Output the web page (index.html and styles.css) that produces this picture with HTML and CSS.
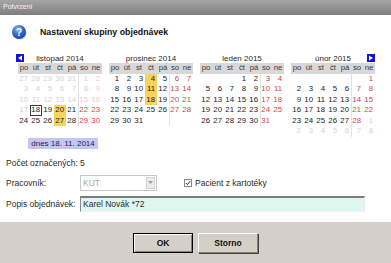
FILE: index.html
```html
<!DOCTYPE html>
<html lang="cs">
<head>
    <meta charset="UTF-8">
    <title>Potvrzení</title>
    <link rel="stylesheet" href="styles.css">
</head>
<body>
    <div class="dialog">
        <div class="titlebar">Potvrzení</div>

        <div class="content">
            <div class="heading">
                <svg class="icon" width="16" height="16" viewBox="0 0 16 16">
                    <defs>
                        <radialGradient id="qball" cx="0.4" cy="0.3" r="0.8">
                            <stop offset="0" stop-color="#8fb4f0"/>
                            <stop offset="0.5" stop-color="#3468c8"/>
                            <stop offset="1" stop-color="#173f98"/>
                        </radialGradient>
                    </defs>
                    <ellipse cx="8.6" cy="9" rx="7" ry="6.6" fill="#c8c8c8"/>
                    <circle cx="8" cy="8" r="7" fill="url(#qball)"/>
                    <text x="8" y="11.6" text-anchor="middle" class="icon-mark">?</text>
                </svg>
                <span class="heading-text">Nastavení skupiny objednávek</span>
            </div>

            <div class="months">
                <div class="month">
                    <div class="caption">
                        <svg class="nav prev" width="8" height="8" viewBox="0 0 8 8"><rect width="8" height="8" fill="#1414d8"/><path d="M2 4 L6 1.5 L6 6.5 Z" fill="#fff"/></svg>
                        <span>listopad 2014</span>
                        <span></span>
                    </div>
                    <div class="grid">
                        <span class="dow">po</span><span class="dow">út</span><span class="dow">st</span><span class="dow">čt</span><span class="dow">pá</span><span class="dow">so</span><span class="dow">ne</span>
                        <span class="day past">27</span><span class="day past">28</span><span class="day past">29</span><span class="day past">30</span><span class="day past">31</span><span class="day past we">1</span><span class="day past we">2</span>
                        <span class="day past">3</span><span class="day past">4</span><span class="day past">5</span><span class="day past">6</span><span class="day past">7</span><span class="day past we">8</span><span class="day past we">9</span>
                        <span class="day past">10</span><span class="day past">11</span><span class="day past">12</span><span class="day past">13</span><span class="day past">14</span><span class="day past we">15</span><span class="day past we">16</span>
                        <span class="day past">17</span><span class="day today">18</span><span class="day">19</span><span class="day mark">20</span><span class="day">21</span><span class="day we">22</span><span class="day we">23</span>
                        <span class="day">24</span><span class="day">25</span><span class="day">26</span><span class="day mark">27</span><span class="day">28</span><span class="day we">29</span><span class="day we">30</span>
                    </div>
                </div>

                <div class="month">
                    <div class="caption">
                        <span></span>
                        <span>prosinec 2014</span>
                        <span></span>
                    </div>
                    <div class="grid">
                        <span class="dow">po</span><span class="dow">út</span><span class="dow">st</span><span class="dow">čt</span><span class="dow">pá</span><span class="dow">so</span><span class="dow">ne</span>
                        <span class="day">1</span><span class="day">2</span><span class="day">3</span><span class="day mark">4</span><span class="day">5</span><span class="day we">6</span><span class="day we">7</span>
                        <span class="day">8</span><span class="day">9</span><span class="day">10</span><span class="day mark">11</span><span class="day">12</span><span class="day we">13</span><span class="day we">14</span>
                        <span class="day">15</span><span class="day">16</span><span class="day">17</span><span class="day mark">18</span><span class="day">19</span><span class="day we">20</span><span class="day we">21</span>
                        <span class="day">22</span><span class="day">23</span><span class="day">24</span><span class="day">25</span><span class="day">26</span><span class="day we">27</span><span class="day we">28</span>
                        <span class="day">29</span><span class="day">30</span><span class="day">31</span><span class="day"></span><span class="day"></span><span class="day"></span><span class="day"></span>
                    </div>
                </div>

                <div class="month">
                    <div class="caption">
                        <span></span>
                        <span>leden 2015</span>
                        <span></span>
                    </div>
                    <div class="grid">
                        <span class="dow">po</span><span class="dow">út</span><span class="dow">st</span><span class="dow">čt</span><span class="dow">pá</span><span class="dow">so</span><span class="dow">ne</span>
                        <span class="day"></span><span class="day"></span><span class="day"></span><span class="day">1</span><span class="day">2</span><span class="day we">3</span><span class="day we">4</span>
                        <span class="day">5</span><span class="day">6</span><span class="day">7</span><span class="day">8</span><span class="day">9</span><span class="day we">10</span><span class="day we">11</span>
                        <span class="day">12</span><span class="day">13</span><span class="day">14</span><span class="day">15</span><span class="day">16</span><span class="day we">17</span><span class="day we">18</span>
                        <span class="day">19</span><span class="day">20</span><span class="day">21</span><span class="day">22</span><span class="day">23</span><span class="day we">24</span><span class="day we">25</span>
                        <span class="day">26</span><span class="day">27</span><span class="day">28</span><span class="day">29</span><span class="day">30</span><span class="day we">31</span><span class="day"></span>
                    </div>
                </div>

                <div class="month">
                    <div class="caption">
                        <span></span>
                        <span>únor 2015</span>
                        <svg class="nav next" width="8" height="8" viewBox="0 0 8 8"><rect width="8" height="8" fill="#1414d8"/><path d="M6 4 L2 1.5 L2 6.5 Z" fill="#fff"/></svg>
                    </div>
                    <div class="grid">
                        <span class="dow">po</span><span class="dow">út</span><span class="dow">st</span><span class="dow">čt</span><span class="dow">pá</span><span class="dow">so</span><span class="dow">ne</span>
                        <span class="day"></span><span class="day"></span><span class="day"></span><span class="day"></span><span class="day"></span><span class="day"></span><span class="day we">1</span>
                        <span class="day">2</span><span class="day">3</span><span class="day">4</span><span class="day">5</span><span class="day">6</span><span class="day we">7</span><span class="day we">8</span>
                        <span class="day">9</span><span class="day">10</span><span class="day">11</span><span class="day">12</span><span class="day">13</span><span class="day we">14</span><span class="day we">15</span>
                        <span class="day">16</span><span class="day">17</span><span class="day">18</span><span class="day">19</span><span class="day">20</span><span class="day we">21</span><span class="day we">22</span>
                        <span class="day">23</span><span class="day">24</span><span class="day">25</span><span class="day">26</span><span class="day">27</span><span class="day we">28</span><span class="day past we">1</span>
                        <span class="day past">2</span><span class="day past">3</span><span class="day past">4</span><span class="day past">5</span><span class="day past">6</span><span class="day past we">7</span><span class="day past we">8</span>
                    </div>
                </div>
            </div>

            <div class="today-row"><span class="today-label">dnes 18. 11. 2014</span></div>

            <div class="form">
                <div class="row count-row">
                    <span class="label">Počet označených:</span>
                    <span>5</span>
                </div>
                <div class="row">
                    <span class="label">Pracovník:</span>
                    <div class="combo">
                        <span class="combo-text">KUT</span>
                        <span class="combo-btn"><svg width="5" height="3" viewBox="0 0 5 3"><path d="M0 0 H5 L2.5 3 Z" fill="#a0a0a0"/></svg></span>
                    </div>
                    <label class="check">
                        <span class="check-box"><svg width="6" height="6" viewBox="0 0 6 6"><path d="M0.8 3 L2.4 4.6 L5.2 1.2" stroke="#222" stroke-width="1" fill="none"/></svg></span>
                        Pacient z kartotéky
                    </label>
                </div>
                <div class="row">
                    <span class="label">Popis objednávek:</span>
                    <div class="text-input">Karel Novák *72</div>
                </div>
            </div>
        </div>

        <div class="footer">
            <button class="btn default">OK</button>
            <button class="btn">Storno</button>
        </div>
    </div>
</body>
</html>
```

FILE: styles.css
```css
body {
    margin: 0;
    background: #fff;
}
.dialog {
    width: 391px;
    height: 263px;
    display: flex;
    flex-direction: column;
    font-family: "Liberation Sans", Arial, sans-serif;
    font-size: 8.5px;
    color: #2a2a2a;
    overflow: hidden;
}
.titlebar {
    height: 15px;
    line-height: 14px;
    padding-left: 3px;
    font-size: 7px;
    color: #f4f4f4;
    background: linear-gradient(#a6a6a6, #7e7e7e);
}
.content {
    flex: 1;
    background: #fff;
    padding-top: 9px;
}
.heading {
    display: flex;
    align-items: center;
    height: 16px;
    padding-left: 11px;
}
.icon-mark {
    font-family: "Liberation Sans", Arial, sans-serif;
    font-weight: bold;
    font-size: 10px;
    fill: #fff;
}
.heading-text {
    margin-left: 13px;
    font-weight: bold;
    font-size: 8.8px;
    color: #111;
}
.months {
    display: flex;
    gap: 7px;
    margin: 13px 0 0 18px;
}
.month {
    width: 84px;
}
.caption {
    display: grid;
    grid-template-columns: 8px 1fr 8px;
    align-items: center;
    height: 10px;
    font-size: 8px;
    text-align: center;
    color: #2a2a2a;
}
.nav.prev {
    margin-left: -2px;
}
.grid {
    display: grid;
    grid-template-columns: repeat(7, 12px);
    grid-auto-rows: 10.5px;
    font-size: 7.8px;
    line-height: 10.5px;
}
.dow {
    background: #d8d8d8;
    text-align: center;
    color: #3a3a3a;
}
.day {
    text-align: right;
    padding-right: 2px;
    color: #222;
}
.day:nth-child(7n+6) {
    border-left: 1px solid #e2e2e2;
}
.day.we {
    color: #e04040;
}
.day.past {
    color: #d4d4d4;
}
.day.past.we {
    color: #f3c8c8;
}
.day.mark {
    background: #f6d25e;
}
.day.today {
    box-shadow: inset 0 0 0 1px #3a3a3a;
}
.today-row {
    margin: 1px 0 0 28px;
}
.today-label {
    display: inline-block;
    width: 70px;
    height: 11px;
    line-height: 11px;
    text-align: center;
    font-size: 8px;
    background: #c6c6f4;
    color: #1c1c50;
}
.form {
    margin-top: 7px;
    padding-left: 6px;
    display: flex;
    flex-direction: column;
    gap: 5px;
}
.row {
    display: flex;
    align-items: center;
    height: 16px;
}
.count-row {
    height: 14px;
}
.label {
    width: 74px;
}
.combo {
    width: 77px;
    height: 16px;
    box-sizing: border-box;
    border: 1px solid #c8c8c8;
    display: flex;
    align-items: center;
    padding-left: 2px;
}
.combo-text {
    flex: 1;
    color: #a8a8a8;
}
.combo-btn {
    width: 9px;
    height: 12px;
    margin-right: 1px;
    background: #ececec;
    border: 1px solid #d4d4d4;
    box-sizing: border-box;
    display: flex;
    align-items: center;
    justify-content: center;
}
.check {
    display: flex;
    align-items: center;
    gap: 3px;
    margin-left: 27px;
}
.check-box {
    width: 8px;
    height: 8px;
    box-sizing: border-box;
    border: 1px solid #8a8a8a;
    display: flex;
    align-items: center;
    justify-content: center;
}
.text-input {
    width: 285px;
    height: 16px;
    box-sizing: border-box;
    padding-left: 2px;
    line-height: 13px;
    background: #e0f7ef;
    border-top: 2px solid #7c7c7c;
    border-left: 1px solid #8a8a8a;
    border-right: 1px solid #e8e8e8;
    border-bottom: 1px solid #f4f4f4;
}
.footer {
    height: 41px;
    background: #d4d0c8;
    display: flex;
    justify-content: center;
    gap: 5px;
    padding-top: 11px;
    box-sizing: border-box;
}
.btn {
    width: 60px;
    height: 20px;
    padding: 0;
    font-family: "Liberation Sans", Arial, sans-serif;
    font-size: 8.5px;
    font-weight: bold;
    color: #111;
    background: #d4d0c8;
    border: 1px solid;
    border-color: #fff #808080 #808080 #fff;
    box-shadow: 1px 1px 0 #404040;
}
.btn.default {
    border: 1px solid #000;
    box-shadow: inset 1px 1px 0 #fff, inset -1px -1px 0 #808080;
}
```
